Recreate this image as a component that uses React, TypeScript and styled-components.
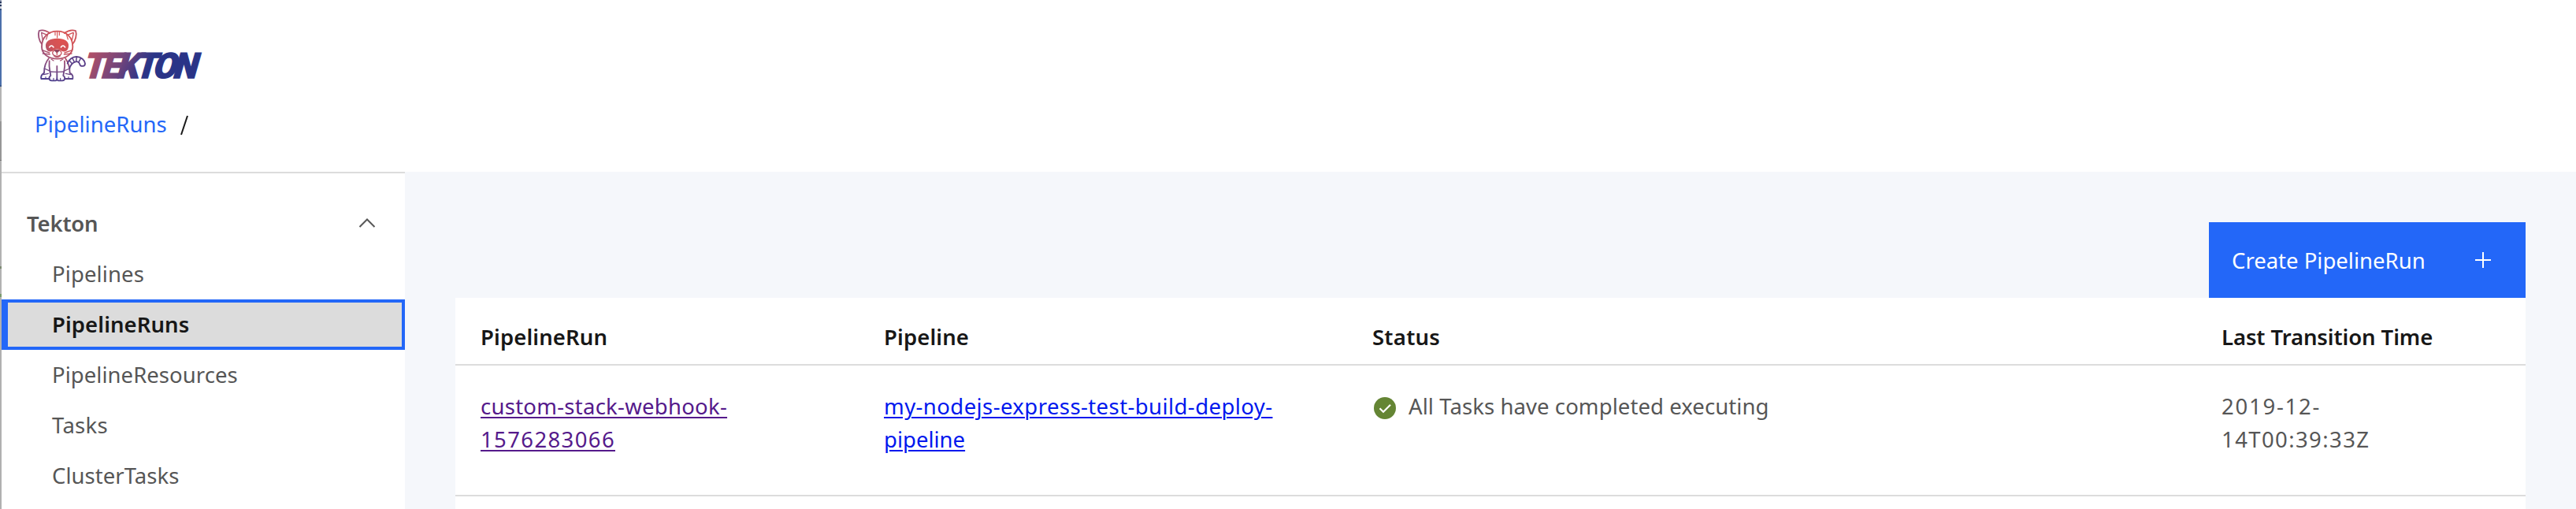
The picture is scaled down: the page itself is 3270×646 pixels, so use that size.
import React from 'react';
import styled, { createGlobalStyle } from 'styled-components';

const GlobalStyle = createGlobalStyle`
  body {
    margin: 0;
    background: #fff;
    font-family: 'Noto Sans', 'Open Sans', sans-serif;
    font-size: 27.5px;
    color: #565656;
  }
  * { box-sizing: border-box; }
`;

const Page = styled.div`
  display: flex;
  height: 646px;
  overflow: hidden;
`;

const WindowEdge = styled.div`
  width: 2px;
  flex: none;
  background: linear-gradient(
    to bottom,
    #8d98b0 0 2px, #26365c 2px 4px, #b9c2d2 4px 6px, #26365c 6px 8px,
    #d0d5de 8px 11px, #35507f 11px 13px, #4c70ab 13px 108px, #3d5a8a 108px 110px,
    #b4b4b4 110px 154px, #979797 154px 203px, #777 203px 204px,
    #b2b2b2 204px 338px, #7c8a72 338px 341px, #b2b2b2 341px 373px,
    #7a9a6c 373px 377px, #b0b0b0 377px 646px
  );
`;

const Frame = styled.div`
  flex: 1;
  min-width: 0;
  display: flex;
  flex-direction: column;
`;

const Header = styled.header`
  height: 218px;
  flex: none;
  padding: 35px 0 0 42px;
  display: flex;
  flex-direction: column;
  align-items: flex-start;
`;

const Logo = styled.svg`
  display: block;
  width: 222px;
  height: 78px;
  margin-left: 2px;
  flex: none;
  overflow: visible;
`;

const Breadcrumb = styled.nav`
  display: flex;
  height: 42px;
  line-height: 42px;
  margin-top: 24px;
  color: #171717;
`;

const Crumb = styled.a`
  color: #2367f8;
  text-decoration: none;
  letter-spacing: 0.06px;
`;

const Slash = styled.svg`
  width: 10px;
  height: 26px;
  margin: 9px 0 0 17px;
`;

const Main = styled.div`
  flex: 1;
  display: flex;
  min-height: 0;
`;

const Sidebar = styled.aside`
  width: 512px;
  flex: none;
  padding-top: 32px;
  border-top: 2px solid #dcdcdc;
  background: #fff;
`;

const SectionTitle = styled.div`
  display: flex;
  align-items: center;
  justify-content: space-between;
  height: 64px;
  padding: 0 37px 2px 32px;
  font-weight: 600;
  letter-spacing: -0.2px;
`;

const NavItem = styled.a<{ $active?: boolean; $track?: number }>`
  display: block;
  height: 64px;
  line-height: 64px;
  padding-left: 64px;
  letter-spacing: ${(p) => p.$track ?? 0}px;
  ${(p) =>
    p.$active &&
    `
    background: #dcdcdc;
    border: 4px solid #2367f8;
    border-left-width: 8px;
    padding-left: 56px;
    line-height: 56px;
    font-weight: 600;
    color: #171717;
  `}
`;

const Content = styled.main`
  flex: 1;
  min-width: 0;
  padding: 64px 64px 0;
  background: #f5f7fb;
  display: flex;
  flex-direction: column;
`;

const CreateButton = styled.button`
  align-self: flex-end;
  width: 402px;
  height: 96px;
  flex: none;
  padding: 0 44px 0 29px;
  border: 0;
  display: flex;
  align-items: center;
  justify-content: space-between;
  background: #2367f8;
  color: #fff;
  font: inherit;
`;

const Grid = styled.div`
  display: grid;
  grid-template-columns: 512px 620px 1078px 1fr;
  padding: 0 32px;
  border-bottom: 2px solid #dcdcdc;
`;

const Table = styled.section`
  flex: 1;
  background: #fff;
`;

const HeadRow = styled(Grid)`
  height: 86px;
  padding-top: 18px;
  line-height: 64px;
  font-weight: 600;
  color: #171717;
`;

const BodyRow = styled(Grid)`
  height: 166px;
  padding-top: 31px;
  line-height: 42px;
`;

const Text = styled.span<{ $track?: number }>`
  letter-spacing: ${(p) => p.$track ?? 0}px;
  white-space: nowrap;
`;

const CellLink = styled.a<{ $visited?: boolean }>`
  color: ${(p) => (p.$visited ? '#551a8b' : '#0018ee')};
  text-decoration: underline;
  text-decoration-thickness: 2px;
  text-underline-offset: 2.5px;
`;

const StatusCell = styled.div`
  display: flex;
  align-items: flex-start;
  gap: 16px;
  padding-left: 2px;
`;

const CheckIcon = styled.svg`
  width: 28px;
  height: 28px;
  margin-top: 9px;
`;

function TektonLogo() {
  return (
    <Logo viewBox="138 105 666 234" role="img" aria-label="Tekton">
      <defs>
        <radialGradient id="cat" gradientUnits="userSpaceOnUse" cx="238" cy="150" r="165">
          <stop offset="0" stopColor="#e0524f" />
          <stop offset="0.3" stopColor="#cf5358" />
          <stop offset="0.58" stopColor="#96507c" />
          <stop offset="1" stopColor="#4b3f8e" />
        </radialGradient>
        <linearGradient id="word" gradientUnits="userSpaceOnUse" x1="0" y1="-60" x2="225" y2="0">
          <stop offset="0" stopColor="#ae4f68" />
          <stop offset="0.5" stopColor="#76457a" />
          <stop offset="1" stopColor="#2a3487" />
        </linearGradient>
      </defs>
      <g fill="none" stroke="url(#cat)" strokeWidth="5.5" strokeLinecap="round" strokeLinejoin="round">
        <path d="M190 126C176 116 160 113 149 117C143 132 149 156 159 167" />
        <path d="M245 126C259 116 276 113 288 117C294 132 287 156 277 167" />
        <path d="M158 126L163 154M158 124L181 134M280 126L274 154M279 124L256 134" strokeWidth="4" />
        <path d="M218 119C182 119 159 143 159 178C159 205 184 224 218 224C252 224 277 205 277 178C277 143 254 119 218 119Z" />
        <path d="M218 121V144M210 122V134M226 122V134M181 134L176 150M254 134L259 150" strokeWidth="3.5" />
        <path d="M177 179C173 158 193 149 218 149C243 149 262 158 258 179C254 196 241 197 231 189C223 184 212 184 204 189C194 197 181 196 177 179Z" fill="url(#cat)" />
        <path d="M188 180Q196 168 204 180M232 180Q240 168 248 180" stroke="#fff" strokeWidth="4.5" />
        <ellipse cx="217" cy="202" rx="17" ry="12" fill="#fff" strokeWidth="4" />
        <path d="M209 192H225L217 200Z" fill="#8d4560" stroke="#8d4560" strokeWidth="4" />
        <path d="M217 199V208M206 213Q217 222 229 213M161 191L188 201M163 204L190 207M275 191L246 201M273 204L244 207" strokeWidth="4" />
        <path d="M186 222C174 236 168 254 168 278C161 282 155 291 157 300H188M249 222C260 238 266 254 266 278C274 282 279 291 277 300H247" />
        <path d="M188 232C185 258 191 271 193 288C184 294 186 307 197 307H211C217 307 217 301 217 294V252M246 232C249 258 243 271 241 288C250 294 248 307 237 307H223C217 307 217 301 217 294" />
        <path d="M169 261L187 269M265 261L247 269M190 273L215 274M219 274L244 273M195 225L204 231M240 225L230 231M166 284L184 280M268 284L250 280" strokeWidth="4" />
        <path d="M174 300V293M204 306V298M230 306V298M261 300V293" strokeWidth="3.5" />
        <g stroke="#5b4089">
          <path d="M257 242C262 228 275 216 291 216C309 216 323 229 324 242C324 254 307 255 304 245C302 237 295 233 288 235C276 238 267 250 265 261" />
          <path d="M264 230L273 241M275 221L283 235M292 217L290 232M308 221L300 236" strokeWidth="4.5" />
        </g>
      </g>
      <g transform="translate(312 298) skewX(-16)">
        <text
          x="0"
          y="0"
          textLength="420"
          lengthAdjust="spacingAndGlyphs"
          fill="url(#word)"
          stroke="url(#word)"
          strokeWidth="4"
          fontFamily="Roboto, sans-serif"
          fontWeight="900"
          fontSize="134"
          letterSpacing="-14"
        >
          TEKTON
        </text>
      </g>
    </Logo>
  );
}

const NAV = [
  { label: 'Pipelines', track: 0.1 },
  { label: 'PipelineRuns', track: 0.07, active: true },
  { label: 'PipelineResources', track: 0.04 },
  { label: 'Tasks', track: 0.3 },
  { label: 'ClusterTasks', track: 0.04 },
];

export default function App() {
  return (
    <>
      <GlobalStyle />
      <Page>
        <WindowEdge />
        <Frame>
          <Header>
            <TektonLogo />
            <Breadcrumb>
              <Crumb>PipelineRuns</Crumb>
              <Slash viewBox="0 0 10 26">
                <path d="M1 25L9 1" stroke="#171717" strokeWidth="2" />
              </Slash>
            </Breadcrumb>
          </Header>
          <Main>
            <Sidebar>
              <SectionTitle>
                Tekton
                <svg width="22" height="14" viewBox="0 0 22 14">
                  <path d="M1.5 12L11 2.5L20.5 12" fill="none" stroke="#565656" strokeWidth="2" />
                </svg>
              </SectionTitle>
              {NAV.map((n) => (
                <NavItem key={n.label} $active={n.active} $track={n.track}>
                  {n.label}
                </NavItem>
              ))}
            </Sidebar>
            <Content>
              <CreateButton>
                Create PipelineRun
                <svg width="20" height="20" viewBox="0 0 20 20">
                  <path d="M9 0h2v9h9v2h-9v9H9v-9H0V9h9z" fill="#fff" />
                </svg>
              </CreateButton>
              <Table>
                <HeadRow>
                  <Text $track={0.1}>PipelineRun</Text>
                  <Text $track={0.1}>Pipeline</Text>
                  <Text $track={0.25}>Status</Text>
                  <Text $track={-0.1}>Last Transition Time</Text>
                </HeadRow>
                <BodyRow>
                  <div>
                    <CellLink $visited>
                      <Text $track={0.26}>custom-stack-webhook-</Text>
                      <br />
                      <Text $track={1.37}>1576283066</Text>
                    </CellLink>
                  </div>
                  <div>
                    <CellLink>
                      <Text $track={0.42}>my-nodejs-express-test-build-deploy-</Text>
                      <br />
                      <Text>pipeline</Text>
                    </CellLink>
                  </div>
                  <StatusCell>
                    <CheckIcon viewBox="0 0 28 28">
                      <circle cx="14" cy="14" r="14" fill="#648534" />
                      <path d="M7.5 14.2L12 18.7L21 9.7" fill="none" stroke="#fff" strokeWidth="2.2" />
                    </CheckIcon>
                    <Text $track={0.08}>All Tasks have completed executing</Text>
                  </StatusCell>
                  <div>
                    <Text $track={1.75}>2019-12-</Text>
                    <br />
                    <Text $track={1.4}>14T00:39:33Z</Text>
                  </div>
                </BodyRow>
              </Table>
            </Content>
          </Main>
        </Frame>
      </Page>
    </>
  );
}
